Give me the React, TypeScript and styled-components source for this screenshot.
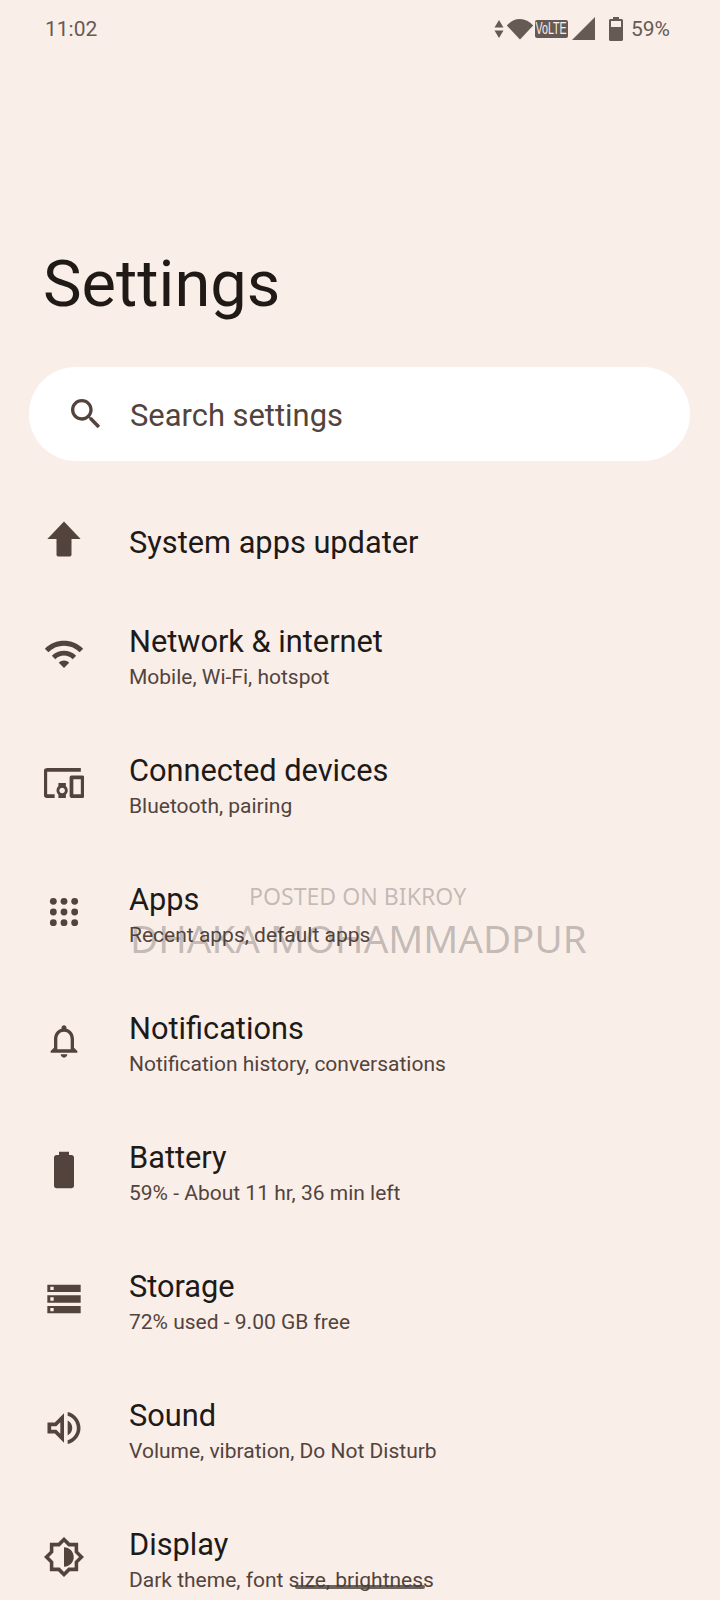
import React from "react";
import styled, { createGlobalStyle } from "styled-components";

const Global = createGlobalStyle`
  html, body { margin: 0; padding: 0; height: 1600px; overflow: hidden; background: #faeee9; }
  #root { height: 1600px; }
`;

const Page = styled.div`
  position: relative;
  width: 720px;
  height: 1600px;
  overflow: hidden;
  background: #faeee9;
  font-family: Roboto, "Liberation Sans", sans-serif;
  color: #201a17;
`;

const StatusBar = styled.div`
  display: flex;
  align-items: center;
  justify-content: space-between;
  height: 56px;
  padding: 1px 50px 0 45px;
  box-sizing: border-box;
  color: #665a54;
  font-size: 21px;
`;

const StatusIcons = styled.div`
  display: flex;
  align-items: center;
`;

const VoLte = styled.span`
  display: flex;
  align-items: center;
  justify-content: center;
  width: 33px;
  height: 18px;
  margin: 0 4px 0 1px;
  border-radius: 2px;
  background: #665a54;
  color: #faeee9;
  font-family: "Liberation Sans", sans-serif;
  font-size: 13px;
`;

const VoLteText = styled.span`
  display: block;
  white-space: nowrap;
  transform: scale(0.82, 1.2);
`;

const Percent = styled.span`
  margin-left: 8px;
  font-size: 21px;
`;

const Title = styled.h1`
  margin: 0;
  padding: 190px 0 0 43px;
  height: 76px;
  font-size: 65px;
  line-height: 76px;
  font-weight: 400;
`;

const SearchBar = styled.div`
  display: flex;
  align-items: center;
  box-sizing: border-box;
  width: 661px;
  height: 94px;
  margin: 45px 0 28px 29px;
  padding-left: 37px;
  gap: 24px;
  border-radius: 47px;
  background: #ffffff;
  color: #52443c;
  font-size: 30.9px;
`;

const SearchLabel = styled.span`
  padding-top: 2px;
`;

const List = styled.div`
  display: flex;
  flex-direction: column;
`;

const Row = styled.div<{ $single?: boolean }>`
  display: flex;
  align-items: center;
  flex: none;
  height: ${(p) => (p.$single ? 100 : 129)}px;
  padding-left: 44px;
  gap: 45px;
`;

const IconSlot = styled.svg`
  flex: none;
  width: 40px;
  height: 40px;
  fill: #52443c;
`;

const RowText = styled.div`
  display: flex;
  flex-direction: column;
  gap: 3px;
  padding-top: 7px;
`;

const RowTitle = styled.div`
  font-size: 30.75px;
  line-height: 36px;
`;

const RowSub = styled.div`
  font-size: 21px;
  line-height: 28px;
  color: #52443c;
`;

const Mark = styled.div<{ $size: number; $left: number; $top: number }>`
  position: absolute;
  left: ${(p) => p.$left}px;
  top: ${(p) => p.$top}px;
  font-family: "Noto Sans", "Open Sans", sans-serif;
  font-weight: 400;
  font-size: ${(p) => p.$size}px;
  line-height: 1;
  white-space: nowrap;
  color: rgba(60, 58, 58, 0.3);
`;

const Smudge = styled.div`
  position: absolute;
  left: 295px;
  top: 1585px;
  width: 130px;
  height: 4px;
  border-radius: 2px;
  background: rgba(70, 62, 58, 0.8);
`;

const icons: Record<string, { box?: string; art: React.ReactNode }> = {
  update: { art: <path d="M12 1.500 22 12h-5.500v9.500a1 1 0 0 1-1 1h-7a1 1 0 0 1-1-1V12H2Z" /> },
  wifi: {
    box: "0.500 0.500 23 23",
    art: <path d="M1 9l2 2c4.970-4.970 13.030-4.970 18 0l2-2C16.930 2.930 7.080 2.930 1 9zm8 8l3 3 3-3c-1.650-1.660-4.340-1.660-6 0zm-4-4l2 2c2.760-2.760 7.240-2.760 10 0l2-2C15.140 9.140 8.870 9.140 5 13z" />,
  },
  devices: {
    box: "1.300 1.300 21.400 21.400",
    art: <path d="M3 6h18V4H3c-1.100 0-2 .9-2 2v12c0 1.100.9 2 2 2h4v-2H3V6zm10 6H9v1.780c-.61.55-1 1.330-1 2.220s.39 1.670 1 2.220V20h4v-1.780c.61-.55 1-1.340 1-2.220s-.39-1.670-1-2.220V12zm-2 5.500c-.83 0-1.500-.67-1.500-1.500s.67-1.500 1.500-1.500 1.500.67 1.500 1.500-.67 1.500-1.500 1.500zM22 8h-6c-.5 0-1 .5-1 1v10c0 .5.5 1 1 1h6c.5 0 1-.5 1-1V9c0-.5-.5-1-1-1zm-1 10h-4v-8h4v8z" />,
  },
  apps: {
    art: (
      <>
        {[5.6, 12, 18.4].flatMap((y) =>
          [5.6, 12, 18.4].map((x) => <circle key={`${x}-${y}`} cx={x} cy={y} r={2.05} />)
        )}
      </>
    ),
  },
  bell: {
    art: <path d="M12 22c1.100 0 2-.9 2-2h-4c0 1.100.9 2 2 2zm6-6v-5c0-3.070-1.630-5.640-4.500-6.320V4c0-.83-.67-1.500-1.500-1.500s-1.500.67-1.500 1.500v.68C7.640 5.360 6 7.920 6 11v5l-2 2v1h16v-1l-2-2zm-2 1H8v-6c0-2.480 1.510-4.500 4-4.500s4 2.020 4 4.500v6z" />,
  },
  battery: {
    art: <path d="M9 1h6v2h1.500c.8 0 1.500.7 1.500 1.500v17c0 .8-.7 1.500-1.500 1.500h-9C6.700 23 6 22.300 6 21.500v-17C6 3.700 6.700 3 7.500 3H9Z" />,
  },
  storage: {
    art: <path fillRule="evenodd" d="M2 3.400h20v4.400H2zM3.800 4.600v2h2v-2zM2 9.800h20v4.400H2zM3.800 11v2h2v-2zM2 16.200h20v4.400H2zM3.800 17.400v2h2v-2z" />,
  },
  sound: {
    box: "1.100 1.100 21.800 21.800",
    art: <path d="M3 9v6h4l5 5V4L7 9H3zm7-.17v6.340L7.830 13H5v-2h2.830L10 8.830zM16.500 12c0-1.770-1.020-3.290-2.500-4.030v8.050c1.480-.73 2.500-2.250 2.500-4.020zM14 3.230v2.060c2.890.86 5 3.540 5 6.710s-2.110 5.850-5 6.710v2.060c4.010-.91 7-4.490 7-8.770 0-4.280-2.990-7.860-7-8.770z" />,
  },
  display: {
    box: "0.700 0.700 22.600 22.600",
    art: <path d="M20 8.690V4h-4.690L12 .69 8.690 4H4v4.690L.69 12 4 15.310V20h4.690L12 23.310 15.310 20H20v-4.690L23.310 12 20 8.690zm-2 5.790V18h-3.520L12 20.480 9.520 18H6v-3.520L3.520 12 6 9.520V6h3.520L12 3.520 14.480 6H18v3.520L20.480 12 18 14.480zM12 6.500v11c3.030 0 5.500-2.470 5.500-5.500S15.030 6.500 12 6.500z" />,
  },
};

const rows = [
  { icon: "wifi", title: "Network & internet", sub: "Mobile, Wi-Fi, hotspot" },
  { icon: "devices", title: "Connected devices", sub: "Bluetooth, pairing" },
  { icon: "apps", title: "Apps", sub: "Recent apps, default apps" },
  { icon: "bell", title: "Notifications", sub: "Notification history, conversations" },
  { icon: "battery", title: "Battery", sub: "59% - About 11 hr, 36 min left" },
  { icon: "storage", title: "Storage", sub: "72% used - 9.00 GB free" },
  { icon: "sound", title: "Sound", sub: "Volume, vibration, Do Not Disturb" },
  { icon: "display", title: "Display", sub: "Dark theme, font size, brightness" },
];

const RowIcon = ({ name }: { name: string }) => (
  <IconSlot viewBox={icons[name].box ?? "0 0 24 24"}>{icons[name].art}</IconSlot>
);

export default function App() {
  return (
    <Page>
      <Global />
      <StatusBar>
        <span>11:02</span>
        <StatusIcons>
          <svg width="10" height="20" viewBox="0 0 10 20" fill="#665a54">
            <path d="M5 1 9.500 8.500H.5ZM5 19 .5 11.500h9Z" />
          </svg>
          <svg width="28" height="22" viewBox="0 0 28 22" fill="#665a54" style={{ marginLeft: 2 }}>
            <path d="M14 21.500 .8 7.500C4.500 3.200 9 1 14 1s9.500 2.200 13.200 6.500Z" />
          </svg>
          <VoLte><VoLteText>VoLTE</VoLteText></VoLte>
          <svg width="23" height="23" viewBox="0 0 22 22" fill="#665a54">
            <path d="M22 0v22H0Z" />
          </svg>
          <svg width="14" height="24" viewBox="0 0 14 24" fill="#665a54" style={{ marginLeft: 14 }}>
            <path fillRule="evenodd" d="M4 0h6v2h2.500c.8 0 1.500.7 1.500 1.500v19c0 .8-.7 1.500-1.500 1.500h-11C.7 24 0 23.300 0 22.500v-19C0 2.700.7 2 1.500 2H4ZM2 4v6h10V4Z" />
          </svg>
          <Percent>59%</Percent>
        </StatusIcons>
      </StatusBar>
      <Title>Settings</Title>
      <SearchBar>
        <svg width="40" height="40" viewBox="0 0 24 24" fill="#52443c">
          <path d="M15.500 14h-.79l-.28-.27C15.410 12.590 16 11.110 16 9.500 16 5.910 13.090 3 9.500 3S3 5.910 3 9.500 5.910 16 9.500 16c1.610 0 3.090-.59 4.230-1.570l.27.28v.79l5 4.990L20.490 19l-4.990-5zm-6 0C7.010 14 5 11.990 5 9.500S7.010 5 9.500 5 14 7.010 14 9.500 11.990 14 9.500 14z" />
        </svg>
        <SearchLabel>Search settings</SearchLabel>
      </SearchBar>
      <List>
        <Row $single>
          <RowIcon name="update" />
          <RowText>
            <RowTitle>System apps updater</RowTitle>
          </RowText>
        </Row>
        {rows.map((r) => (
          <Row key={r.title}>
            <RowIcon name={r.icon} />
            <RowText>
              <RowTitle>{r.title}</RowTitle>
              <RowSub>{r.sub}</RowSub>
            </RowText>
          </Row>
        ))}
      </List>
      <Mark $size={23.1} $left={249} $top={885}>POSTED ON BIKROY</Mark>
      <Mark $size={38.6} $left={130} $top={919}>DHAKA MOHAMMADPUR</Mark>
      <Smudge />
    </Page>
  );
}
